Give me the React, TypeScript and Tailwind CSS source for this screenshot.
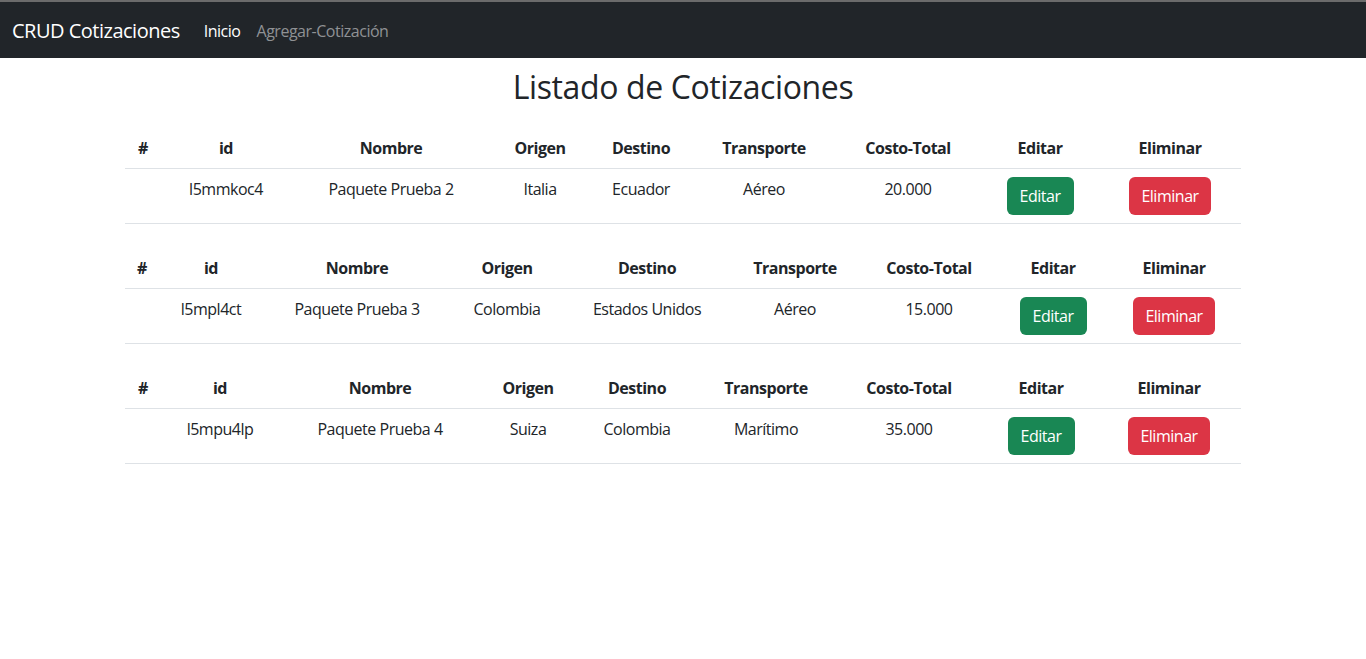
import React from "react";

type Row = {
  id: string;
  nombre: string;
  origen: string;
  destino: string;
  transporte: string;
  costo: string;
  widths: number[];
};

const rows: Row[] = [
  {
    id: "l5mmkoc4",
    nombre: "Paquete Prueba 2",
    origen: "Italia",
    destino: "Ecuador",
    transporte: "Aéreo",
    costo: "20.000",
    widths: [36, 130, 200, 98, 104, 142, 146, 118, 142],
  },
  {
    id: "l5mpl4ct",
    nombre: "Paquete Prueba 3",
    origen: "Colombia",
    destino: "Estados Unidos",
    transporte: "Aéreo",
    costo: "15.000",
    widths: [34, 104, 188, 112, 168, 128, 140, 108, 134],
  },
  {
    id: "l5mpu4lp",
    nombre: "Paquete Prueba 4",
    origen: "Suiza",
    destino: "Colombia",
    transporte: "Marítimo",
    costo: "35.000",
    widths: [36, 118, 202, 94, 124, 134, 152, 112, 144],
  },
];

const headers = [
  "#",
  "id",
  "Nombre",
  "Origen",
  "Destino",
  "Transporte",
  "Costo-Total",
  "Editar",
  "Eliminar",
];

function Tabla({ r }: { r: Row }) {
  const cells = ["", r.id, r.nombre, r.origen, r.destino, r.transporte, r.costo];
  return (
    <table className="w-full table-fixed border-collapse text-center align-top mb-6">
      <colgroup>
        {r.widths.map((w, i) => (
          <col key={i} style={{ width: w }} />
        ))}
      </colgroup>
      <thead>
        <tr>
          {headers.map((h) => (
            <th
              key={h}
              className="px-2 py-2 font-bold leading-6 border-b border-[#dee2e6] text-[#212529] tracking-[-0.03em]"
            >
              {h}
            </th>
          ))}
        </tr>
      </thead>
      <tbody>
        <tr className="align-top">
          {cells.map((c, i) => (
            <td
              key={i}
              className="px-2 py-2 leading-6 border-b border-[#dee2e6] text-[#212529] tracking-[-0.03em]"
            >
              {c}
            </td>
          ))}
          <td className="px-2 py-2 border-b border-[#dee2e6]">
            <button className="h-[38px] w-[67px] rounded-[6px] bg-[#198754] text-white leading-6 tracking-[-0.03em]">
              Editar
            </button>
          </td>
          <td className="px-2 py-2 border-b border-[#dee2e6]">
            <button className="h-[38px] w-[82px] rounded-[6px] bg-[#dc3545] text-white leading-6 tracking-[-0.03em]">
              Eliminar
            </button>
          </td>
        </tr>
      </tbody>
    </table>
  );
}

export default function App() {
  return (
    <div
      className="min-h-[659px] bg-white text-base text-[#212529]"
      style={{ fontFamily: '"Open Sans", "Noto Sans", sans-serif' }}
    >
      <nav className="h-[58px] bg-[#212529] border-t-2 border-[#6b6b6b] flex items-center px-3 pt-px">
        <span className="text-[20px] leading-[30px] text-white mr-4 tracking-[-0.025em]">
          CRUD Cotizaciones
        </span>
        <span className="px-2 text-white leading-6 tracking-[-0.03em]">Inicio</span>
        <span className="px-2 text-[#8f9194] leading-6 tracking-[-0.03em]">Agregar-Cotización</span>
      </nav>
      <div className="w-[1140px] mx-auto px-3">
        <h1 className="text-center text-[32px] font-medium leading-[1.2] mt-[10px] mb-[22px] tracking-[-0.012em]">
          Listado de Cotizaciones
        </h1>
        {rows.map((r) => (
          <Tabla key={r.id} r={r} />
        ))}
      </div>
    </div>
  );
}
